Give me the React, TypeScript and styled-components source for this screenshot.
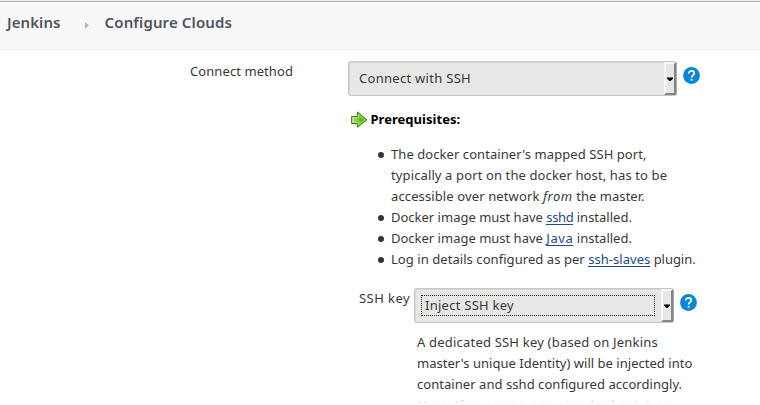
import React from 'react';
import styled, { createGlobalStyle } from 'styled-components';

const GlobalStyle = createGlobalStyle`
  * { box-sizing: border-box; }
  body {
    margin: 0;
    background: #fff;
    color: #383838;
    font: 13px/21px "Noto Sans", sans-serif;
    overflow: hidden;
  }
`;

const Page = styled.div`
  height: 405px;
  overflow: hidden;
  position: relative;
`;

const Breadcrumbs = styled.header`
  height: 50px;
  display: flex;
  align-items: center;
  padding: 0 7px 4px;
  background: #f8f8f8;
  border-bottom: 1px solid #ebebeb;
  box-shadow: inset 0 1px #eeeeee, inset 0 2px #b0b0b0;
`;

const Crumb = styled.span<{ $track?: number }>`
  font-size: 15px;
  font-weight: 600;
  color: #4d545d;
  white-space: nowrap;
  letter-spacing: ${p => p.$track ?? 0}px;
`;

const CrumbArrow = styled.svg`
  width: 4px;
  height: 7px;
  margin: 5px 16px 0 24px;
  flex: none;
`;

const Form = styled.main`
  display: grid;
  grid-template-columns: 158px 1fr;
  padding: 11px 0 0 190px;
`;

const Label = styled.label`
  white-space: nowrap;
`;

const Field = styled.div`
  min-width: 0;
`;

const Control = styled.div`
  display: flex;
  align-items: flex-start;
`;

const Select = styled.div<{ $width: number }>`
  width: ${p => p.$width}px;
  height: 35px;
  display: flex;
  align-items: stretch;
  background: #e7e7e5;
  border: 1px solid #c6c6c6;
  border-right-color: #aaa;
  border-radius: 3px;
  box-shadow: inset 1px 1px #d8d8d7;
`;

const Value = styled.span<{ $focused?: boolean }>`
  flex: 1;
  height: 21px;
  margin: 6px;
  padding-left: 3px;
  border: 1px dotted ${p => (p.$focused ? '#222' : 'transparent')};
  line-height: 19px;
  white-space: nowrap;
`;

const DropButton = styled.span`
  width: 12px;
  display: flex;
  align-items: center;
  justify-content: center;
  background: #e7e7e5;
  border: 2px solid;
  border-color: #f8f8f7 #858583 #858583 #f8f8f7;
`;

const HelpIcon = styled.svg`
  width: 17px;
  height: 17px;
  margin: 6px 0 0 5.5px;
  flex: none;
`;

const Notice = styled.div`
  display: flex;
  align-items: center;
  gap: 2.5px;
  height: 21px;
  margin: 13px 0 0 3px;
  color: #000;
`;

const Strong = styled.strong`
  font-weight: 700;
  letter-spacing: 0.03px;
`;

const List = styled.ul`
  list-style: none;
  margin: 14px 0 0;
  padding: 0 0 0 43px;
`;

const Item = styled.li`
  display: flex;
  flex-direction: column;

  &::before {
    content: '';
    width: 6px;
    height: 6px;
    margin: 8px 0 -14px -13px;
    border-radius: 50%;
    background: #333;
  }
`;

const Line = styled.span`
  display: block;
  height: 21px;
  white-space: pre;
`;

const Run = styled.span<{ $track: number }>`
  letter-spacing: ${p => p.$track}px;
`;

const Emphasis = styled.em<{ $track: number }>`
  letter-spacing: ${p => p.$track}px;
`;

const Code = styled.code`
  font: 13px/13px "Liberation Mono", monospace;
`;

const Link = styled.a<{ $track: number }>`
  display: inline-block;
  height: 18px;
  vertical-align: top;
  border-bottom: 1px solid #204a87;
  color: #204a87;
  text-decoration: none;
  letter-spacing: ${p => p.$track}px;
`;

const KeyField = styled.div`
  display: grid;
  grid-template-columns: 55px 1fr;
  margin: 18px 0 0 11px;
`;

const Help = styled.div`
  padding: 9px 0 0 3px;
`;

const Fade = styled.div`
  position: absolute;
  inset: auto 0 0;
  height: 11px;
  background: linear-gradient(transparent, rgba(255, 255, 255, 0.7) 45%, #fff 92%);
`;

const HelpMark = () => (
  <HelpIcon viewBox="0 0 17 17" aria-label="Help">
    <circle cx="8.5" cy="8.5" r="8.4" fill="#0786d4" />
    <path d="M5.8 6.4C5.8 4.8 6.9 3.8 8.5 3.8s2.8 1 2.8 2.4c0 1.9-2.7 2.1-2.7 4.4" fill="none" stroke="#fff" strokeWidth="1.7" />
    <rect x="7.7" y="11.9" width="1.8" height="1.8" fill="#fff" />
  </HelpIcon>
);

const Dropdown = ({ width, focused, track, children }: { width: number; focused?: boolean; track: number; children: string }) => (
  <Select $width={width}>
    <Value $focused={focused}>
      <Run $track={track}>{children}</Run>
    </Value>
    <DropButton>
      <svg width="6" height="4" viewBox="0 0 6 4">
        <path d="M0 .5H6V1.5L3.5 4H2.5L0 1.5Z" fill="#000" />
      </svg>
    </DropButton>
  </Select>
);

const GreenArrow = () => (
  <svg width="17" height="17" viewBox="0 0 17 17">
    <defs>
      <linearGradient id="leaf" x2="1">
        <stop offset="0" stopColor="#b9dda0" />
        <stop offset="0.5" stopColor="#6fc528" />
        <stop offset="1" stopColor="#50a80c" />
      </linearGradient>
    </defs>
    <path d="M.6 5.5H6.5V1L16 8.8 6.5 16.2V12.5H.6Z" fill="url(#leaf)" stroke="#3c7d12" />
    <path d="M1.7 6.6H7.5V3.3L14.3 8.8 7.5 14V11.5H1.7Z" fill="none" stroke="#b9e889" strokeWidth=".8" />
  </svg>
);

export default function App() {
  return (
    <Page>
      <GlobalStyle />
      <Breadcrumbs>
        <Crumb $track={0.08}>Jenkins</Crumb>
        <CrumbArrow viewBox="0 0 4 7">
          <path d="M0 0L4 3.5 0 7Z" fill="#b5b5b5" />
        </CrumbArrow>
        <Crumb $track={0.12}>Configure Clouds</Crumb>
      </Breadcrumbs>
      <Form>
        <Label>
          <Run $track={0.08}>Connect method</Run>
        </Label>
        <Field>
          <Control>
            <Dropdown width={329} track={0.29}>Connect with SSH</Dropdown>
            <HelpMark />
          </Control>
          <Notice>
            <GreenArrow />
            <Strong>Prerequisites:</Strong>
          </Notice>
          <List>
            <Item>
              <Line><Run $track={0.07}>The docker container's mapped SSH port,</Run></Line>
              <Line><Run $track={0.12}>typically a port on the docker host, has to be</Run></Line>
              <Line>
                <Run $track={0.12}>accessible over network </Run>
                <Emphasis $track={0.5}>from</Emphasis>
                <Run $track={0.05}> the master.</Run>
              </Line>
            </Item>
            <Item>
              <Line>
                <Run $track={0}>Docker image must have </Run>
                <Link $track={-0.35}>sshd</Link>
                <Run $track={0}> installed.</Run>
              </Line>
            </Item>
            <Item>
              <Line>
                <Run $track={0}>Docker image must have </Run>
                <Link $track={0.6}>Java</Link>
                <Run $track={0}> installed.</Run>
              </Line>
            </Item>
            <Item>
              <Line>
                <Run $track={0.06}>Log in details configured as per </Run>
                <Link $track={0.04}>ssh-slaves</Link>
                <Run $track={-0.05}> plugin.</Run>
              </Line>
            </Item>
          </List>
          <KeyField>
            <Label>
              <Run $track={0.44}>SSH key</Run>
            </Label>
            <Field>
              <Control>
                <Dropdown width={260} focused track={0.26}>Inject SSH key</Dropdown>
                <HelpMark />
              </Control>
              <Help>
                <Line><Run $track={0.2}>A dedicated SSH key (based on Jenkins</Run></Line>
                <Line><Run $track={0.02}>master's unique Identity) will be injected into</Run></Line>
                <Line><Run $track={0.05}>container and sshd configured accordingly.</Run></Line>
                <Line>
                  <Run $track={0.15}>Note: If you use a non-standard </Run>
                  <Code>sshd</Code>
                  <Run $track={0.15}>, an</Run>
                </Line>
              </Help>
            </Field>
          </KeyField>
        </Field>
      </Form>
      <Fade />
    </Page>
  );
}
